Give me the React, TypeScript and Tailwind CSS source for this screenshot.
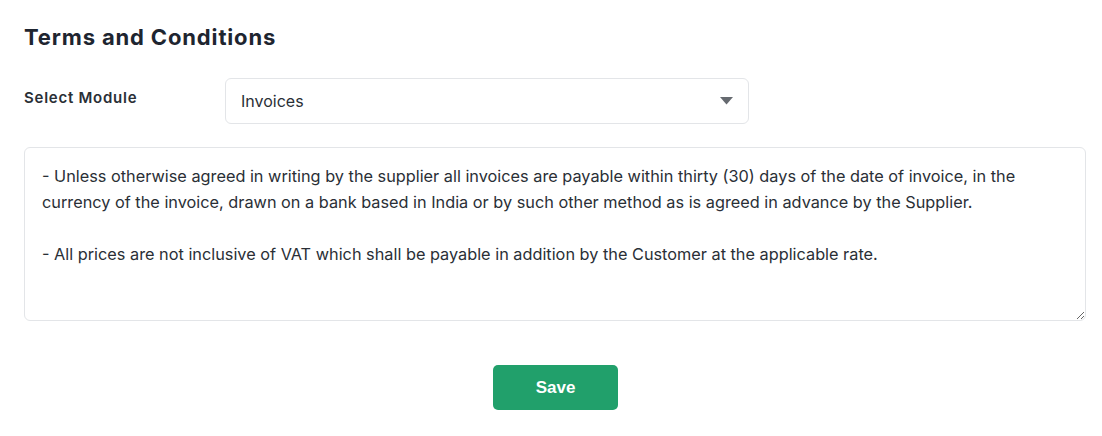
export default function App() {
  const terms =
    '- Unless otherwise agreed in writing by the supplier all invoices are payable within thirty (30) days of the date of invoice, in the currency of the invoice, drawn on a bank based in India or by such other method as is agreed in advance by the Supplier.\n\n- All prices are not inclusive of VAT which shall be payable in addition by the Customer at the applicable rate.';

  return (
    <div className="min-h-screen bg-white px-6 pt-[22px] font-['Inter',sans-serif] text-[#212529]">
      {/* ── Heading ───────────────────────────────────────── */}
      <h1 className="text-[22px] font-bold leading-[30px] text-[#1e2530] tracking-[0.85px]">Terms and Conditions</h1>

      {/* ── Module select ─────────────────────────────────── */}
      <div className="mt-[26px] flex items-start">
        <label className="w-[201px] pt-[9px] text-[15px] font-semibold tracking-[0.75px] text-[#2a2f36]">Select Module</label>
        <div className="flex h-[46px] w-[524px] items-center justify-between rounded-[6px] border border-[#e3e5e8] pl-[15px] pr-[14px]">
          <span className="text-[16px] text-[#2a2f36]">Invoices</span>
          <svg width="13" height="8" viewBox="0 0 13 8" className="mr-[1px]">
            <path d="M0 0 H13 L6.5 7.5 Z" fill="#666a70" />
          </svg>
        </div>
      </div>

      {/* ── Terms body ────────────────────────────────────── */}
      <textarea
        defaultValue={terms}
        className="mt-[23px] block h-[174px] w-[1062px] rounded-[6px] border border-[#e3e5e8] px-[17px] pt-[15px] text-[16.3px] leading-[26px] text-[#2a2f36] outline-none"
      />

      {/* ── Save ──────────────────────────────────────────── */}
      <div className="flex w-[1062px] justify-center pt-[44px]">
        <button className="ml-[1px] h-[45px] w-[125px] rounded-[5px] bg-[#21a06b] font-['Liberation_Sans',sans-serif] text-[17px] font-bold text-white">
          Save
        </button>
      </div>
    </div>
  );
}
